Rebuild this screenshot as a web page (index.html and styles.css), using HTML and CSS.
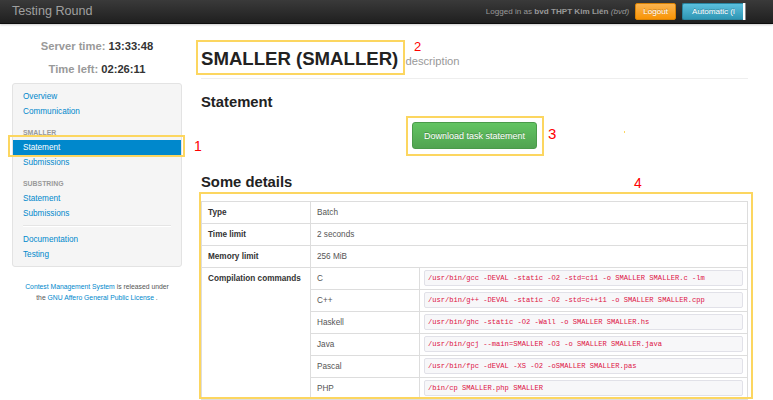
FILE: index.html
```html
<!DOCTYPE html>
<html lang="vi">
<head>
<meta charset="utf-8">
<title>Testing Round</title>
<link rel="stylesheet" href="styles.css">
</head>
<body>
<header class="navbar">
  <span class="brand">Testing Round</span>
  <div class="user">
    <span class="logged">Logged in as <b>bvd THPT Kim Liên</b> <i>(bvd)</i></span>
    <span class="btn btn-warning">Logout</span>
    <span class="btn-clip"><span class="btn btn-info">Automatic (l</span></span>
  </div>
</header>
<div class="layout">
  <aside class="sidebar">
    <p class="clock"><span class="lbl">Server time:</span> 13:33:48</p>
    <p class="clock second"><span class="lbl">Time left:</span> 02:26:11</p>
    <nav class="well">
      <ul class="nav">
        <li><a href="#">Overview</a></li>
        <li><a href="#">Communication</a></li>
        <li class="nav-header">SMALLER</li>
        <li class="active"><a href="#">Statement</a></li>
        <li><a href="#">Submissions</a></li>
        <li class="nav-header">SUBSTRING</li>
        <li><a href="#">Statement</a></li>
        <li><a href="#">Submissions</a></li>
        <li class="divider"></li>
        <li><a href="#">Documentation</a></li>
        <li><a href="#">Testing</a></li>
      </ul>
    </nav>
    <p class="footer"><a href="#">Contest Management System</a> is released under<br>the <a href="#">GNU Affero General Public License</a> .</p>
  </aside>
  <main class="main">
    <div class="page-header"><h1>SMALLER (SMALLER) <small>description</small></h1></div>
    <h2 class="h-statement">Statement</h2>
    <div class="center"><a href="#" class="btn btn-success">Download task statement</a></div>
    <h2 class="h-details">Some details</h2>
    <table class="details">
      <colgroup><col class="c1"><col class="c2"><col></colgroup>
      <tr><th>Type</th><td colspan="2">Batch</td></tr>
      <tr><th>Time limit</th><td colspan="2">2 seconds</td></tr>
      <tr><th>Memory limit</th><td colspan="2">256 MiB</td></tr>
      <tr><th rowspan="6" class="top">Compilation commands</th><td>C</td><td class="cmd"><code>/usr/bin/gcc -DEVAL -static -O2 -std=c11 -o SMALLER SMALLER.c -lm</code></td></tr>
      <tr><td>C++</td><td class="cmd"><code>/usr/bin/g++ -DEVAL -static -O2 -std=c++11 -o SMALLER SMALLER.cpp</code></td></tr>
      <tr><td>Haskell</td><td class="cmd"><code>/usr/bin/ghc -static -O2 -Wall -o SMALLER SMALLER.hs</code></td></tr>
      <tr><td>Java</td><td class="cmd"><code>/usr/bin/gcj --main=SMALLER -O3 -o SMALLER SMALLER.java</code></td></tr>
      <tr><td>Pascal</td><td class="cmd"><code>/usr/bin/fpc -dEVAL -XS -O2 -oSMALLER SMALLER.pas</code></td></tr>
      <tr><td>PHP</td><td class="cmd"><code>/bin/cp SMALLER.php SMALLER</code></td></tr>
    </table>
  </main>
</div>
<div class="mark box1"></div>
<div class="mark box2"></div>
<div class="mark box3"></div>
<div class="mark box4"></div>
<div class="dot"></div>
<span class="num n1">1</span>
<span class="num n2">2</span>
<span class="num n3">3</span>
<span class="num n4">4</span>
</body>
</html>
```

FILE: styles.css
```css
* { box-sizing: border-box; }
html, body { margin: 0; padding: 0; }
body {
  position: relative;
  width: 773px;
  height: 400px;
  overflow: hidden;
  background: #fff;
  font-family: "Liberation Sans", Arial, sans-serif;
  color: #333;
}
a { color: #0088cc; text-decoration: none; }

/* navbar */
.navbar {
  height: 24px;
  display: flex;
  align-items: center;
  background: linear-gradient(#3a3a3a, #1f1f1f);
  border-bottom: 1px solid #0d0d0d;
  box-shadow: 0 1px 2px rgba(0,0,0,.2);
  padding-left: 12px;
  padding-right: 28px;
}
.brand { font-size: 12.6px; color: #a0a0a0; line-height: 16px; margin-top: -2px; }
.user { margin-left: auto; display: flex; align-items: center; margin-top: -1px; }
.logged { font-size: 8.1px; color: #999; margin-right: 6px; }
.logged b { font-weight: bold; }
.btn {
  display: inline-block;
  color: #fff;
  font-size: 8.1px;
  line-height: 10px;
  border-radius: 2px;
  text-shadow: 0 -1px 0 rgba(0,0,0,.25);
  white-space: nowrap;
}
.btn-warning {
  height: 17px;
  padding: 3px 7px;
  margin-right: 6px;
  background: linear-gradient(#fbb450, #f89406);
  border: 1px solid #d98205;
}
.btn-clip {
  display: flex;
  height: 17px;
  border-right: 2px solid #fff;
  box-shadow: 1px 0 0 #888;
}
.btn-info {
  width: 61px;
  height: 17px;
  padding: 3px 0 3px 9px;
  background: linear-gradient(#5bc0de, #2f96b4);
  border: 1px solid #2a85a0;
  border-right: 0;
  border-radius: 2px 0 0 2px;
}

/* layout */
.layout {
  display: flex;
  gap: 19px;
  padding: 0 25px 0 12px;
}
.sidebar { width: 170px; flex: none; padding-top: 16px; }
.clock {
  margin: 0;
  text-align: center;
  font-size: 11.2px;
  line-height: 13px;
  font-weight: bold;
  color: #333;
}
.clock .lbl { color: #999; }
.clock.second { margin-top: 9.5px; }

.well {
  margin-top: 7px;
  background: #f5f5f5;
  border: 1px solid #e3e3e3;
  border-radius: 3px;
  padding: 5px 0 4px;
}
.nav { list-style: none; margin: 0; padding: 0; }
.nav a {
  display: block;
  padding: 2px 10px;
  line-height: 11px;
  font-size: 8.2px;
  color: #0088cc;
}
.nav .active a { background: #0088cc; color: #fff; }
.nav-header {
  margin-top: 6px;
  padding: 2px 10px;
  line-height: 11px;
  font-size: 6.9px;
  font-weight: bold;
  color: #999;
}
.nav .divider {
  height: 2px;
  margin: 4px 10px 5.5px;
  background: #e5e5e5;
  border-bottom: 1px solid #fff;
}
.footer {
  margin: 13.5px 0 0;
  text-align: center;
  font-size: 6.8px;
  line-height: 11px;
  color: #555;
}

/* main */
.main { flex: 1; min-width: 0; }
.page-header {
  margin-top: 24px;
  padding-bottom: 8px;
  border-bottom: 1px solid #eee;
}
h1 {
  margin: 0;
  font-size: 18.6px;
  line-height: 22px;
  font-weight: bold;
  color: #222;
}
h1 small {
  font-size: 11.2px;
  line-height: 1;
  font-weight: normal;
  color: #999;
  margin-left: 2px;
}
h2 {
  margin: 0;
  font-size: 14.8px;
  line-height: 18px;
  font-weight: bold;
  color: #222;
}
.h-statement { margin-top: 14.3px; }
.center { display: flex; justify-content: center; margin-top: 10.7px; }
.btn-success {
  height: 27px;
  padding: 8px 11px;
  font-size: 9px;
  background: linear-gradient(#62c462, #51a351);
  border: 1px solid #4a9a4a;
  border-radius: 3px;
  color: #fff;
}
.h-details { margin-top: 23.7px; }

.details {
  margin-top: 10px;
  width: 100%;
  border-collapse: collapse;
  font-size: 8.2px;
  line-height: 11px;
}
.details .c1, .details .c2 { width: 109px; }
.details th, .details td {
  border: 1px solid #ddd;
  height: 22px;
  padding: 0 6px;
  text-align: left;
  vertical-align: middle;
}
.details th { font-weight: bold; color: #333; }
.details td { color: #555; }
.details th.top { vertical-align: top; padding-top: 5px; }
.details td.cmd { padding: 0 4px; }
.details code {
  display: block;
  height: 16px;
  padding: 0 3px;
  line-height: 14px;
  font-family: "Liberation Mono", "Courier New", monospace;
  font-size: 7.1px;
  color: #dd1144;
  background: #f7f7f9;
  border: 1px solid #e1e1e8;
  border-radius: 2px;
  white-space: nowrap;
}

/* annotations overlay */
.mark { position: absolute; border: 2px solid #fcd660; }
.box1 { left: 8px; top: 135px; width: 177px; height: 22px; }
.box2 { left: 196px; top: 40px; width: 209px; height: 35px; }
.box3 { left: 406px; top: 116px; width: 138px; height: 40px; }
.box4 { left: 199px; top: 192px; width: 554px; height: 207px; }
.dot { position: absolute; left: 624px; top: 131px; width: 1px; height: 2px; background: #fcd660; }
.num {
  position: absolute;
  color: #ff0000;
  font-family: "Liberation Sans", Arial, sans-serif;
  line-height: 1;
}
.n1 { left: 194px; top: 139px; font-size: 14px; }
.n2 { left: 414px; top: 40px; font-size: 13px; }
.n3 { left: 548px; top: 126px; font-size: 15px; }
.n4 { left: 634px; top: 176px; font-size: 14px; }
```
